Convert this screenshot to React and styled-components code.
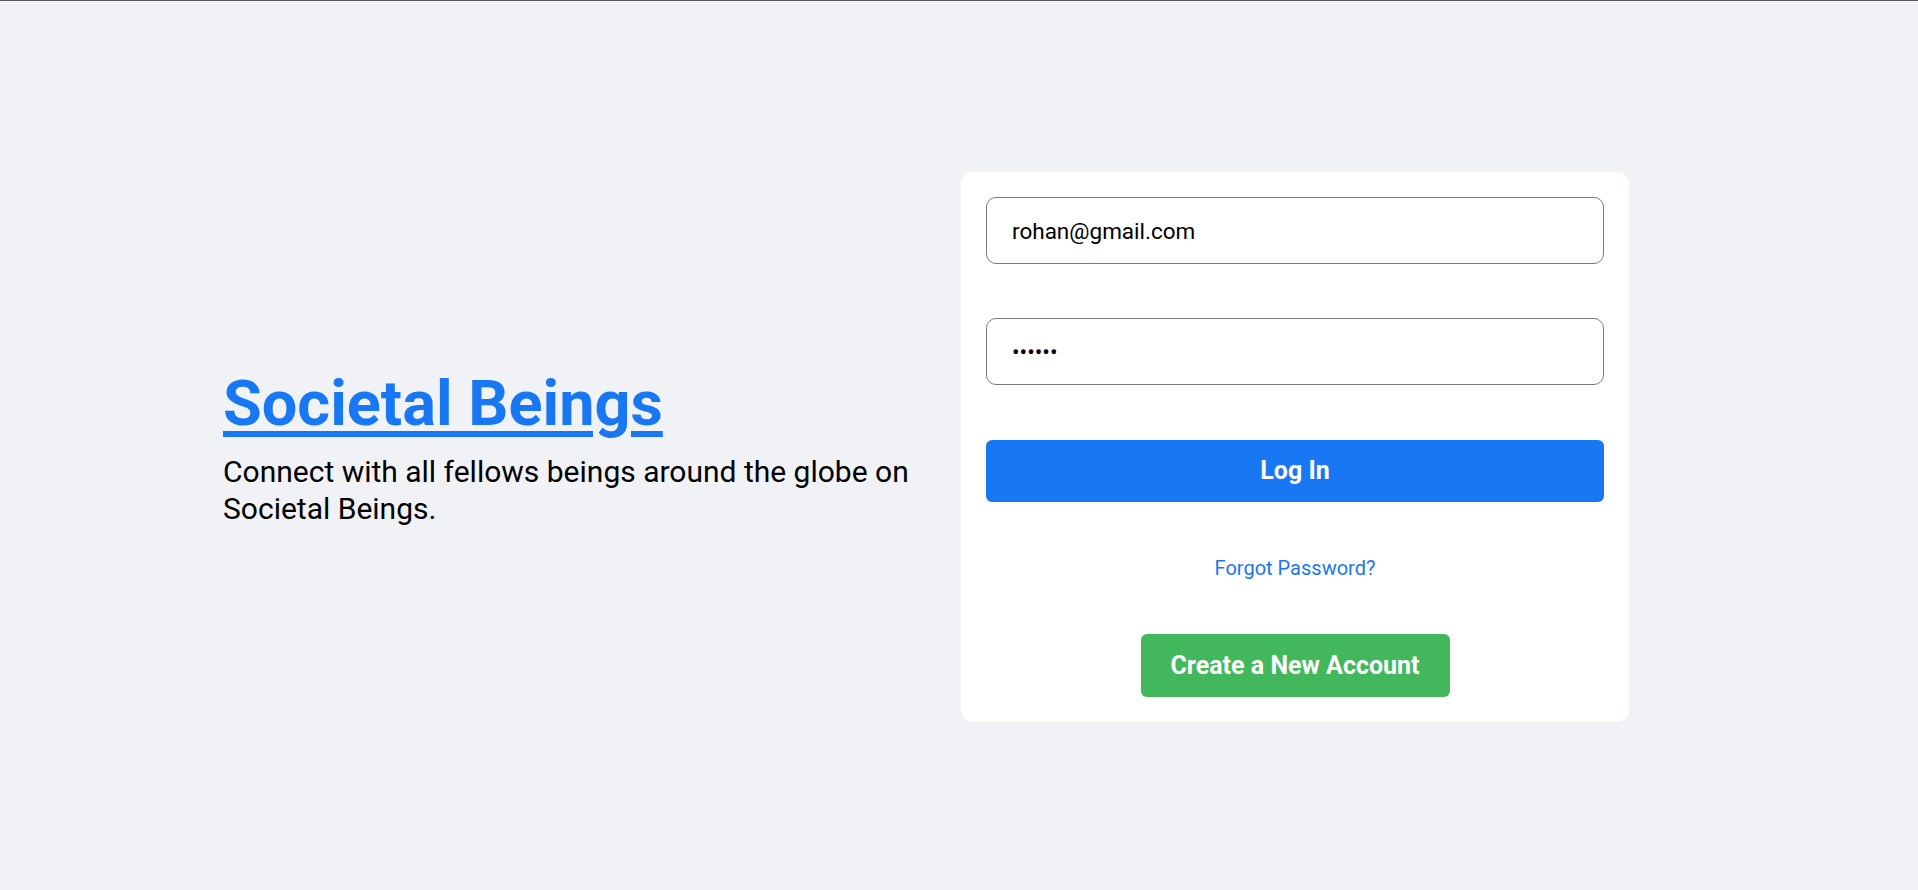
import React from "react";
import styled, { createGlobalStyle } from "styled-components";

const GlobalStyle = createGlobalStyle`
  * { box-sizing: border-box; }
  html, body { margin: 0; padding: 0; }
  body {
    font-family: Roboto, "Liberation Sans", Arial, sans-serif;
    background: #f0f2f5;
    color: #000;
  }
`;

const Page = styled.div`
  height: 890px;
  border-top: 1px solid #58585e;
  padding-top: 3px;
  background: #f0f2f5;
  display: flex;
  align-items: center;
`;

const Wrapper = styled.div`
  margin-left: 223px;
  width: 1406px;
  display: flex;
  align-items: center;
`;

const Left = styled.div`
  flex: 1;
  display: flex;
  flex-direction: column;
  justify-content: center;
`;

const Logo = styled.a`
  font-size: 63px;
  font-weight: 700;
  color: #1877f2;
  text-decoration: underline;
  text-decoration-thickness: 6px;
  text-underline-offset: 6px;
  line-height: 1.172;
  margin-bottom: 12px;
  align-self: flex-start;
  cursor: pointer;
`;

const Desc = styled.span`
  font-size: 30px;
  line-height: 37px;
  color: #000;
  max-width: 730px;
`;

const Card = styled.form`
  width: 668px;
  height: 550px;
  padding: 25px;
  background: #fff;
  border-radius: 12px;
  display: flex;
  flex-direction: column;
  justify-content: space-between;
`;

const Input = styled.input`
  height: 67px;
  border: 1px solid #7b7b7b;
  border-radius: 10px;
  padding: 0 25px;
  font-family: Roboto, "Liberation Sans", Arial, sans-serif;
  font-size: 22.5px;
  color: #000;
  background: #fff;
  &:focus { outline: none; }
`;

const Button = styled.button`
  height: ${(p) => p.$h}px;
  width: ${(p) => p.$w};
  align-self: center;
  border: none;
  border-radius: 6px;
  background: ${(p) => p.$bg};
  color: #fff;
  font-family: Roboto, "Liberation Sans", Arial, sans-serif;
  font-size: 25px;
  font-weight: 700;
  cursor: pointer;
`;

const Forgot = styled.span`
  text-align: center;
  color: #1877f2;
  font-size: 20px;
  line-height: 24px;
  cursor: pointer;
`;

export default function App() {
  return (
    <>
      <GlobalStyle />
      <Page>
        <Wrapper>
          <Left>
            <Logo href="#">Societal Beings</Logo>
            <Desc>Connect with all fellows beings around the globe on Societal Beings.</Desc>
          </Left>
          <Card onSubmit={(e) => e.preventDefault()}>
            <Input type="email" defaultValue="rohan@gmail.com" placeholder="Email" />
            <Input type="password" defaultValue="123456" placeholder="Password" />
            <Button type="submit" $bg="#1877f2" $h={62} $w="100%">Log In</Button>
            <Forgot>Forgot Password?</Forgot>
            <Button type="button" $bg="#43b75c" $h={63} $w="50%">Create a New Account</Button>
          </Card>
        </Wrapper>
      </Page>
    </>
  );
}
